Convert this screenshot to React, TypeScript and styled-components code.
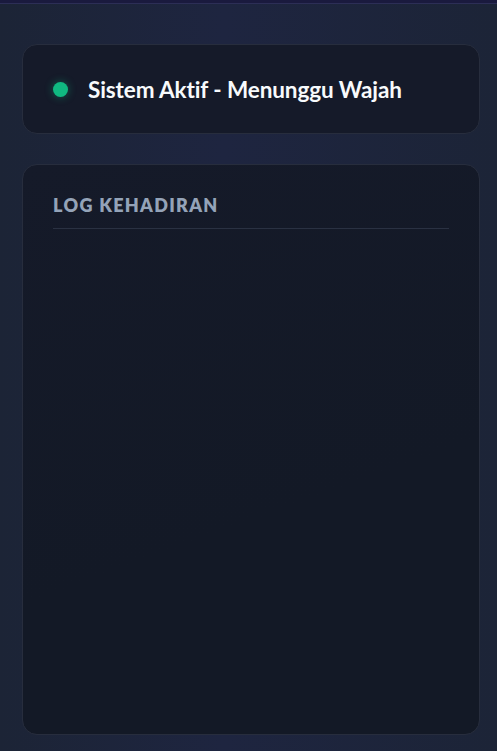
import React from "react";
import styled, { createGlobalStyle } from "styled-components";

const Global = createGlobalStyle`
  html, body {
    margin: 0;
    padding: 0;
    height: 100%;
    background: #1d2538;
  }
  #root {
    min-height: 100vh;
  }
  * {
    box-sizing: border-box;
  }
`;

const Page = styled.div`
  min-height: 751px;
  display: flex;
  flex-direction: column;
  background: linear-gradient(90deg, #1c2436 0%, #1e2540 45%, #1c2437 100%);
  font-family: "Lato", "Inter", sans-serif;
`;

const TopBar = styled.div`
  height: 4px;
  background: #1a1a3e;
  border-bottom: 1px solid #2c2e56;
`;

const Panel = styled.div`
  flex: 1;
  display: flex;
  flex-direction: column;
  gap: 30px;
  padding: 40px 17px 16px 22px;
`;

const Card = styled.div<{ $grow?: boolean }>`
  background: #151a29;
  border: 1px solid #272d3d;
  border-radius: 15px;
  ${(p) => (p.$grow ? "flex: 1;" : "")}
`;

const StatusCard = styled(Card)`
  height: 90px;
  display: flex;
  align-items: center;
  gap: 20px;
  padding: 0 0 0 30px;
`;

const Dot = styled.span`
  width: 15px;
  height: 15px;
  border-radius: 50%;
  background: #10b981;
  box-shadow: 0 0 8px rgba(16, 185, 129, 0.45);
  flex-shrink: 0;
`;

const StatusText = styled.span`
  color: #f8fafc;
  font-size: 22.5px;
  font-weight: 700;
  letter-spacing: -0.1px;
`;

const LogCard = styled(Card)`
  display: flex;
  flex-direction: column;
  padding: 29px 30px 20px 30px;
  background: linear-gradient(160deg, #151a29 0%, #131926 60%, #131926 100%);
`;

const LogTitle = styled.h2`
  margin: 0;
  padding-bottom: 12px;
  border-bottom: 1px solid #2a3142;
  color: #94a3b8;
  font-size: 18px;
  font-weight: 800;
  letter-spacing: 1.3px;
  line-height: 22px;
`;

const LogList = styled.div`
  flex: 1;
`;

export default function App() {
  return (
    <>
      <Global />
      <Page>
        <TopBar />
        <Panel>
          <StatusCard>
            <Dot />
            <StatusText>Sistem Aktif - Menunggu Wajah</StatusText>
          </StatusCard>
          <LogCard $grow>
            <LogTitle>LOG KEHADIRAN</LogTitle>
            <LogList />
          </LogCard>
        </Panel>
      </Page>
    </>
  );
}
